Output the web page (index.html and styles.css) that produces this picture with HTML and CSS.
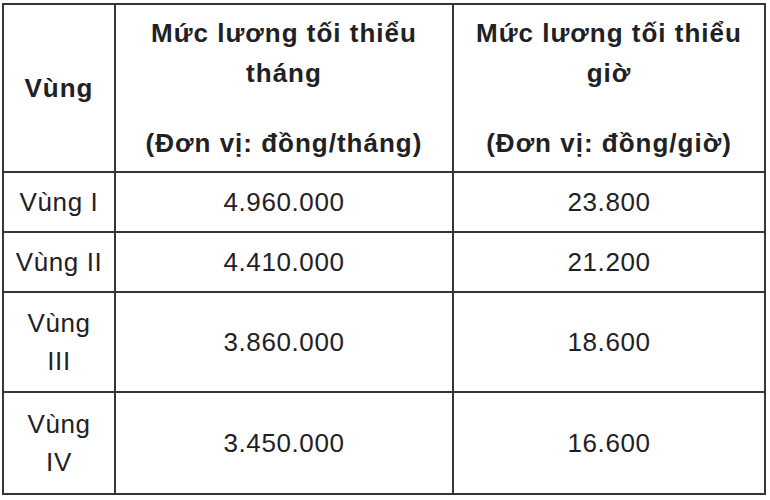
FILE: index.html
```html
<!DOCTYPE html>
<html lang="vi">
<head>
<meta charset="utf-8">
<link rel="stylesheet" href="styles.css">
</head>
<body>
<div class="wage-table">
  <div class="cell head col-region"><p>Vùng</p></div>
  <div class="cell head"><p>Mức lương tối thiểu tháng</p><p class="unit">(Đơn vị: đồng/tháng)</p></div>
  <div class="cell head"><p>Mức lương tối thiểu giờ</p><p class="unit">(Đơn vị: đồng/giờ)</p></div>

  <div class="cell col-region">Vùng I</div>
  <div class="cell">4.960.000</div>
  <div class="cell">23.800</div>

  <div class="cell col-region">Vùng II</div>
  <div class="cell">4.410.000</div>
  <div class="cell">21.200</div>

  <div class="cell col-region">Vùng III</div>
  <div class="cell">3.860.000</div>
  <div class="cell">18.600</div>

  <div class="cell col-region">Vùng IV</div>
  <div class="cell">3.450.000</div>
  <div class="cell">16.600</div>
</div>
</body>
</html>
```

FILE: styles.css
```css
html, body {
  margin: 0;
  padding: 0;
  background: #ffffff;
}

body {
  padding: 3px 0 0 2px;
  font-family: "Liberation Sans", Arial, sans-serif;
  color: #1f2224;
}

.wage-table {
  display: grid;
  grid-template-columns: 112px 338px 312px;
  grid-template-rows: 168px 60px 60px 100px 102px;
  width: max-content;
  border-left: 2px solid #34373a;
  border-top: 2px solid #34373a;
}

.cell {
  box-sizing: border-box;
  border-right: 2px solid #34373a;
  border-bottom: 2px solid #34373a;
  display: flex;
  flex-direction: column;
  align-items: center;
  justify-content: center;
  text-align: center;
  padding: 0 10px;
  font-size: 26px;
  line-height: 38px;
  letter-spacing: 0.6px;
}

.cell.col-region {
  padding: 0 11px;
}

.head {
  font-weight: bold;
  font-size: 26px;
  line-height: 40px;
  letter-spacing: 1px;
}

.head p {
  margin: 0;
}

.head .unit {
  margin-top: 30px;
}
```
